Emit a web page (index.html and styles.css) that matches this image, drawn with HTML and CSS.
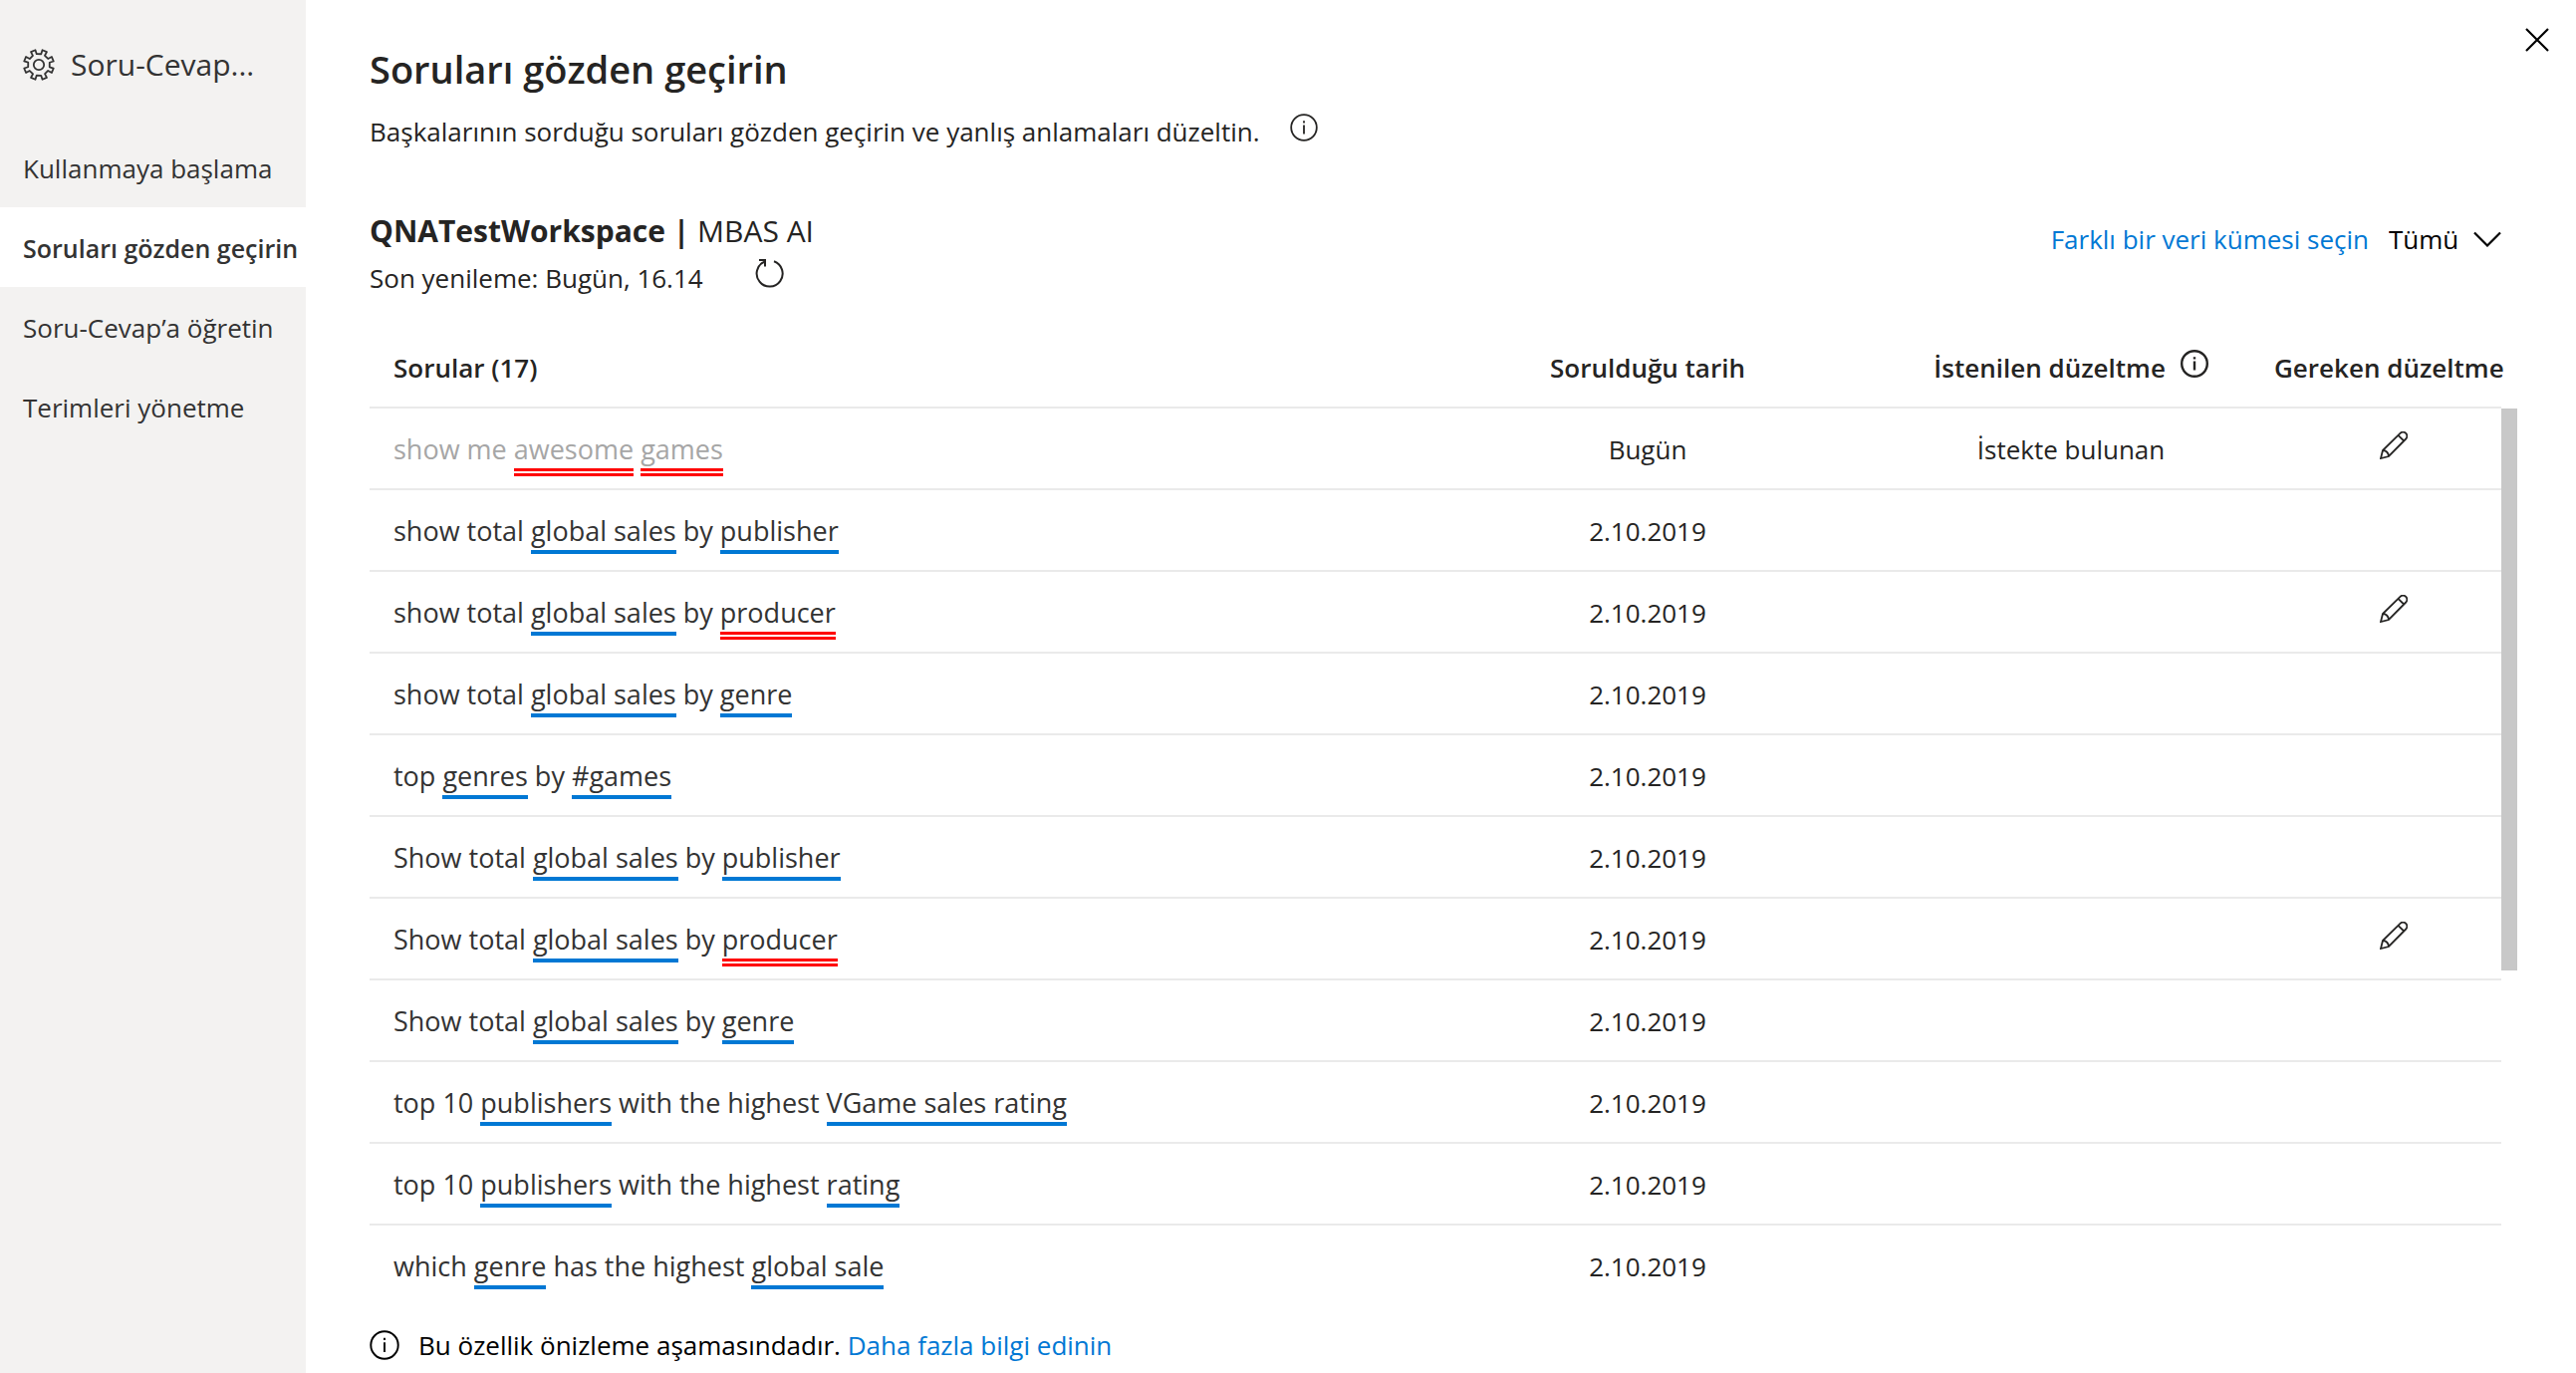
FILE: index.html
```html
<!DOCTYPE html>
<html lang="tr">
<head>
<meta charset="utf-8">
<title>Soruları gözden geçirin</title>
<link rel="stylesheet" href="styles.css">
</head>
<body>
<svg class="defs" aria-hidden="true">
  <symbol id="info" viewBox="0 0 28 28"><circle cx="14" cy="14" r="12.8" fill="none" stroke="currentColor"/><path d="M14 11.5v9M14 7.2v2.2" stroke="currentColor"/></symbol>
  <symbol id="pencil" viewBox="0 0 28 28"><path d="M1 27l2-8L20.500 1.800a4 4 0 0 1 5.700 5.700L9 25zM3 19a6 6 0 0 1 6 6M18.500 3.800l5.700 5.700" fill="none" stroke="currentColor" stroke-width="1.800"/></symbol>
</svg>
<div class="app">
  <aside class="sidebar">
    <div class="sidebar-title">
      <svg class="gear" viewBox="0 0 32 32" aria-hidden="true"><path transform="rotate(22.500 16 16)" d="M14 5.200L13.600 1h4.800L18 5.200l4.200 1.700L24.900 3.700l3.400 3.400-3.200 2.700L26.800 14l4.200-.4v4.800l-4.200-.4-1.700 4.200 3.200 2.700-3.400 3.400-2.700-3.200L18 26.800l.4 4.200h-4.800l.4-4.200-4.200-1.700-2.700 3.200-3.400-3.400 3.200-2.700L5.200 18 1 18.400v-4.800l4.200.4 1.700-4.200-3.200-2.700 3.400-3.400 2.700 3.200z" fill="none" stroke="currentColor" stroke-width="1.800" stroke-linejoin="round"/><circle cx="16" cy="16" r="5.200" fill="none" stroke="currentColor" stroke-width="1.800"/></svg>
      <span>Soru-Cevap...</span>
    </div>
    <nav class="nav">
      <a href="#">Kullanmaya başlama</a>
      <a href="#" class="active" aria-current="page">Soruları gözden geçirin</a>
      <a href="#">Soru-Cevap’a öğretin</a>
      <a href="#">Terimleri yönetme</a>
    </nav>
  </aside>
  <main class="main">
    <button class="close" type="button" aria-label="Kapat"><svg viewBox="0 0 24 24"><path d="M1 1l22 22M23 1L1 23" stroke="currentColor" stroke-width="2.200"/></svg></button>
    <h1>Soruları gözden geçirin</h1>
    <p class="intro">Başkalarının sorduğu soruları gözden geçirin ve yanlış anlamaları düzeltin. <svg class="info"><use href="#info"/></svg></p>
    <div class="toolbar">
      <div class="dataset">
        <h2>QNATestWorkspace | <span>MBAS AI</span></h2>
        <p>Son yenileme: Bugün, 16.14 <button class="refresh" type="button" aria-label="Yenile"><svg viewBox="0 0 30 30"><path d="M19 3.300a13 13 0 1 1-9.500.3M4 2h6v6.500" fill="none" stroke="currentColor" stroke-width="2"/></svg></button></p>
      </div>
      <div class="filters">
        <a href="#">Farklı bir veri kümesi seçin</a>
        <label class="filter"><select aria-label="Filtre"><option>Tümü</option></select><svg viewBox="0 0 28 16"><path d="M1 1.500l13 13 13-13" fill="none" stroke="currentColor" stroke-width="2.200"/></svg></label>
      </div>
    </div>
    <div class="list">
      <table>
        <thead><tr><th class="q">Sorular (17)</th><th class="date">Sorulduğu tarih</th><th class="req">İstenilen düzeltme <svg class="info"><use href="#info"/></svg></th><th class="fix">Gereken düzeltme</th></tr></thead>
        <tbody>
          <tr><td class="q muted">show me <u class="bad">awesome</u> <u class="bad">games</u></td><td>Bugün</td><td>İstekte bulunan</td><td><button class="edit" type="button" aria-label="Düzelt"><svg><use href="#pencil"/></svg></button></td></tr>
          <tr><td class="q">show total <u>global sales</u> by <u>publisher</u></td><td>2.10.2019</td><td></td><td></td></tr>
          <tr><td class="q">show total <u>global sales</u> by <u class="bad">producer</u></td><td>2.10.2019</td><td></td><td><button class="edit" type="button" aria-label="Düzelt"><svg><use href="#pencil"/></svg></button></td></tr>
          <tr><td class="q">show total <u>global sales</u> by <u>genre</u></td><td>2.10.2019</td><td></td><td></td></tr>
          <tr><td class="q">top <u>genres</u> by <u>#games</u></td><td>2.10.2019</td><td></td><td></td></tr>
          <tr><td class="q">Show total <u>global sales</u> by <u>publisher</u></td><td>2.10.2019</td><td></td><td></td></tr>
          <tr><td class="q">Show total <u>global sales</u> by <u class="bad">producer</u></td><td>2.10.2019</td><td></td><td><button class="edit" type="button" aria-label="Düzelt"><svg><use href="#pencil"/></svg></button></td></tr>
          <tr><td class="q">Show total <u>global sales</u> by <u>genre</u></td><td>2.10.2019</td><td></td><td></td></tr>
          <tr><td class="q">top 10 <u>publishers</u> with the highest <u>VGame sales rating</u></td><td>2.10.2019</td><td></td><td></td></tr>
          <tr><td class="q">top 10 <u>publishers</u> with the highest <u>rating</u></td><td>2.10.2019</td><td></td><td></td></tr>
          <tr><td class="q">which <u>genre</u> has the highest <u>global sale</u></td><td>2.10.2019</td><td></td><td></td></tr>
        </tbody>
      </table>
      <div class="scrollbar"><div class="thumb"></div></div>
    </div>
    <p class="notice"><svg class="info"><use href="#info"/></svg><span>Bu özellik önizleme aşamasındadır. <a href="#">Daha fazla bilgi edinin</a></span></p>
  </main>
</div>
</body>
</html>
```
FILE: styles.css
```css
* { box-sizing: border-box; }
body {
  margin: 0;
  background: #fff;
  color: #252423;
  font: 26px/40px "Open Sans", "Noto Sans", sans-serif;
}
h1, h2, p { margin: 0; }
a { color: #0078d4; text-decoration: none; }
button { display: inline-flex; padding: 0; border: 0; background: none; color: inherit; }
.defs { position: absolute; width: 0; height: 0; }
.app { display: flex; min-height: 100vh; }

.sidebar { flex: none; width: 307px; background: #f3f2f1; color: #333; }
.sidebar-title {
  display: flex;
  align-items: center;
  gap: 16px;
  height: 128px;
  padding: 2px 0 0 23px;
  font-size: 30px;
}
.gear { width: 32px; height: 32px; }
.nav a { display: block; padding: 21px 0 19px 23px; color: #333; white-space: nowrap; }
.nav a.active { background: #fff; font-size: 25px; font-weight: 600; }

.main { position: relative; flex: 1; min-width: 0; padding: 43px 59px 0 64px; }
.close { position: absolute; top: 28px; right: 27px; color: #000; }
.close svg { width: 24px; height: 24px; }
h1 { font-size: 38px; line-height: 52px; font-weight: 600; }
.info { width: 28px; height: 28px; stroke-width: 1.8px; }
.intro { padding-top: 17px; }
.intro .info { margin-left: 24px; }

.toolbar { display: flex; justify-content: space-between; padding-top: 60px; }
h2 { font-size: 30px; line-height: 40px; font-weight: 700; }
h2 span { font-weight: 400; }
.dataset p { padding-top: 7px; }
.refresh { margin-left: 46px; }
.refresh svg { width: 30px; height: 30px; }
.filters { display: flex; gap: 20px; padding: 8px 16px 0 0; }
.filter { display: flex; align-items: center; gap: 14px; height: 40px; color: #000; }
select { appearance: none; padding: 0; border: 0; background: none; font: inherit; color: inherit; }
.filter svg { width: 28px; height: 16px; }

.list { display: flex; padding-top: 29px; }
table { flex: 1; width: 100%; table-layout: fixed; border-collapse: separate; border-spacing: 0; }
th, td {
  height: 82px;
  padding: 2px 0 0;
  border-bottom: 2px solid #eaeaea;
  text-align: center;
  white-space: nowrap;
}
th { font-weight: 600; }
.q { padding-left: 24px; text-align: left; }
td.q { color: #333; font-size: 27px; }
td.muted { color: #a6a6a6; }
.date { width: 442px; }
.req { width: 408px; }
.fix { width: 228px; }
.req .info { margin-left: 8px; stroke-width: 2.4px; }
tbody tr:last-child td { border-bottom-color: transparent; }
u { padding-bottom: 1px; border-bottom: 4px solid #0078d4; text-decoration: none; }
.bad { border-bottom: 8px double #f00; }
.edit { margin-left: 12px; }
.edit svg { width: 28px; height: 28px; }
.scrollbar { flex: none; width: 16px; padding-top: 82px; }
.thumb { height: 564px; background: #c8c8c8; }

.notice { display: flex; align-items: center; gap: 19px; padding-top: 18px; color: #000; }
.notice .info { width: 30px; height: 30px; }
```
